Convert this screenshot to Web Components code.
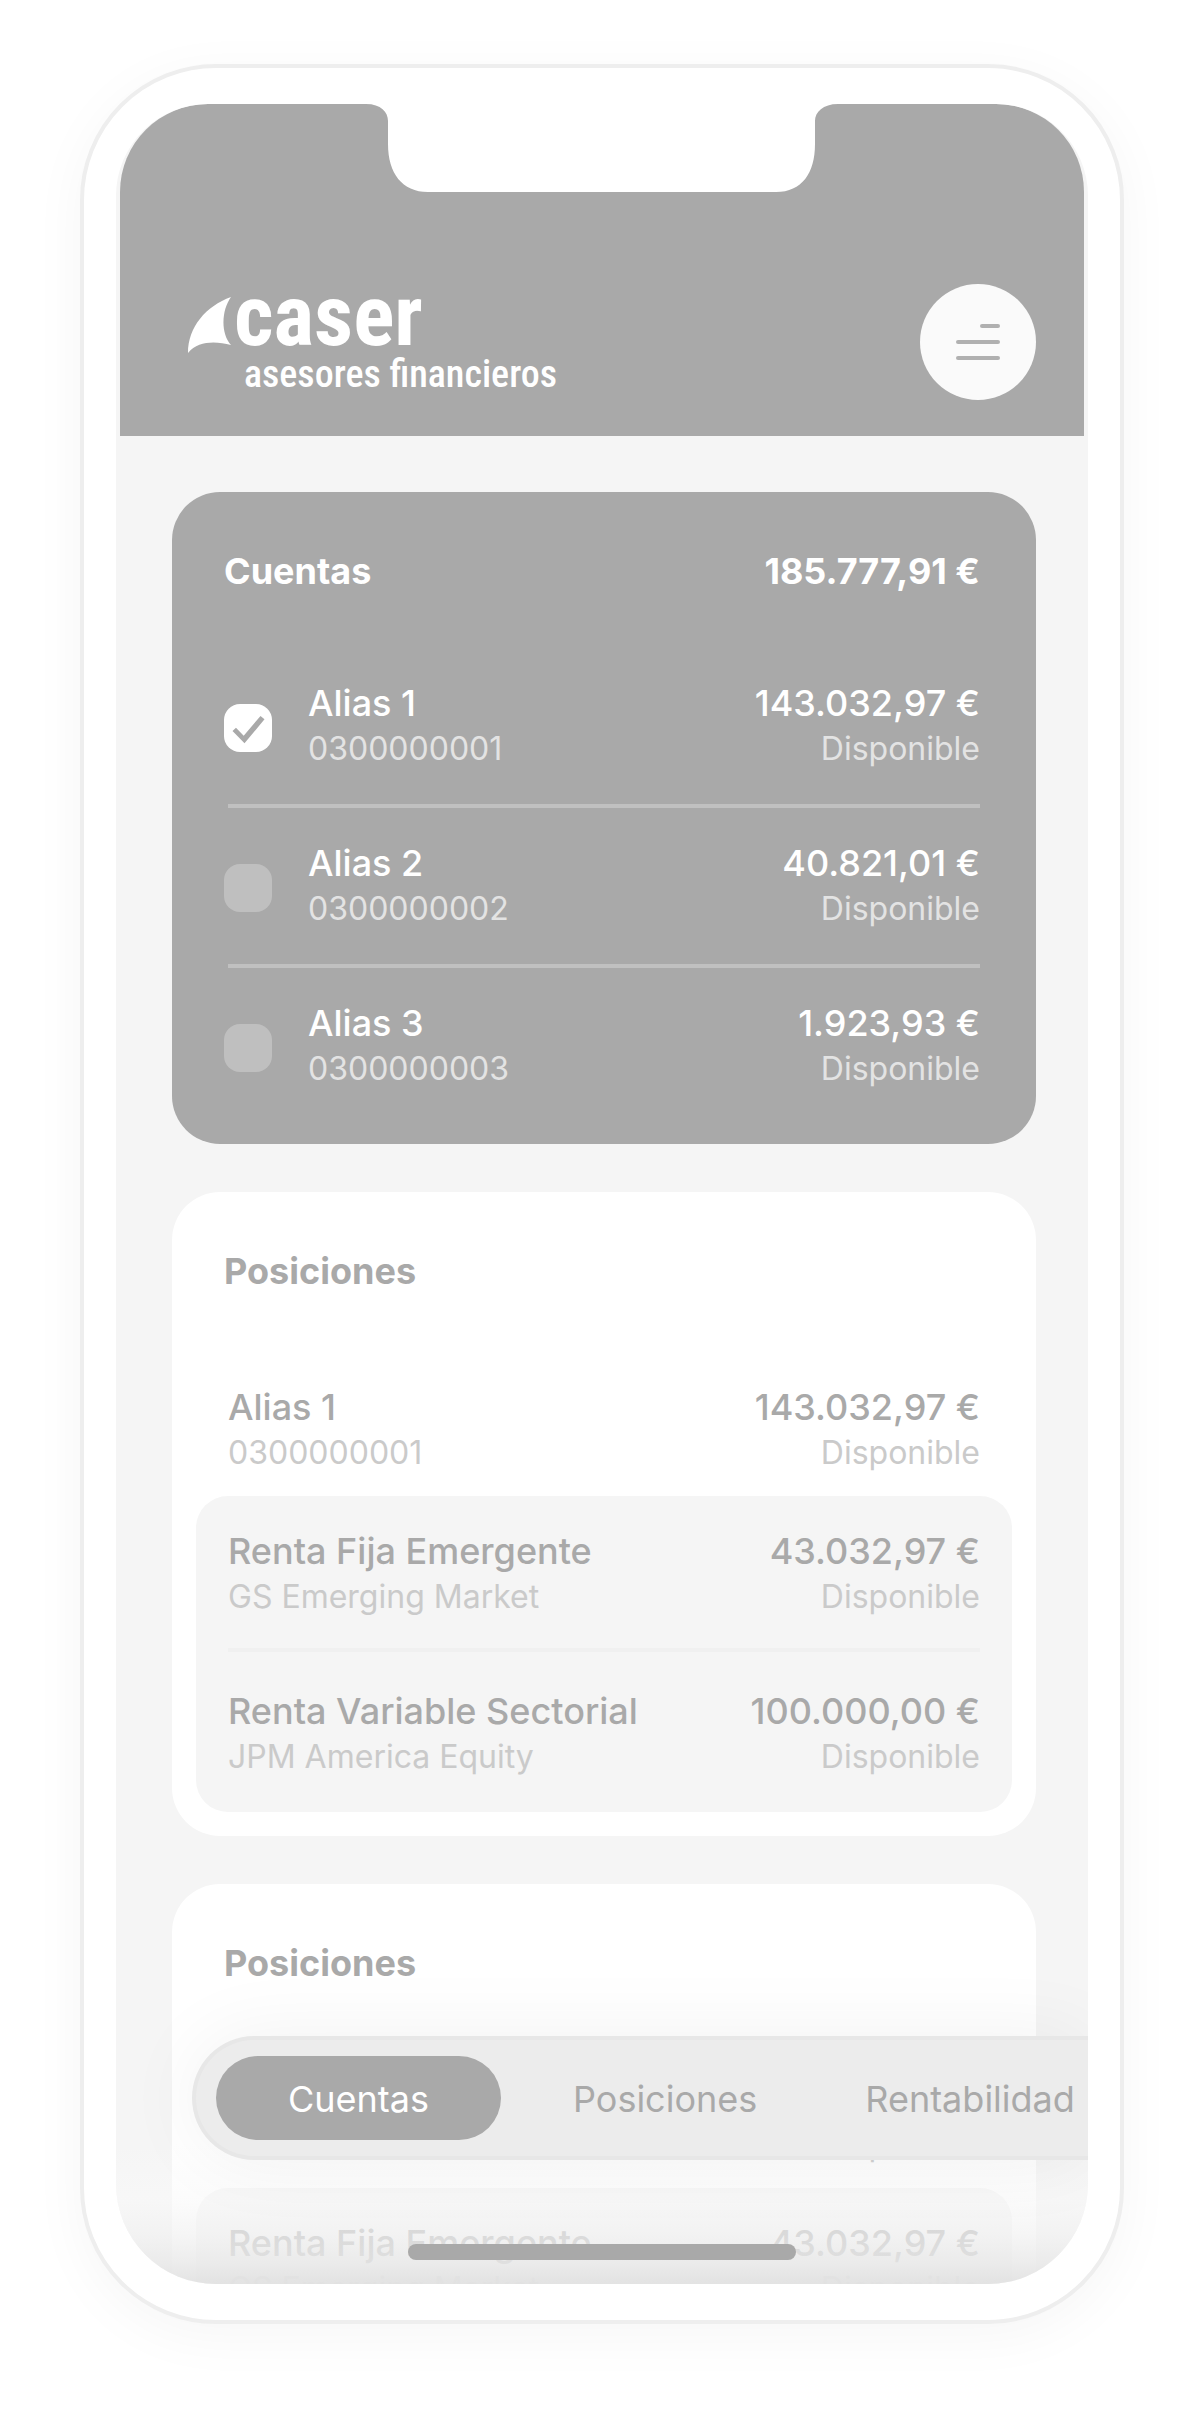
<!DOCTYPE html>
<html lang="es">
<head>
<meta charset="utf-8">
<meta name="viewport" content="width=device-width, initial-scale=1">
<title>Caser asesores financieros</title>
<style>
  * { box-sizing: border-box; }
  body {
    margin: 0;
    height: 100vh;
    padding: 64px 80px 96px;
    background: #fff;
    font-family: Inter, "Liberation Sans", sans-serif;
    color: #a9a9a9;
    --grey: #a9a9a9;
    --soft: #cacaca;
    --surface: #f5f5f5;
  }
</style>
</head>
<body>
<phone-frame>
  <app-header slot="header"></app-header>

  <account-card heading="Cuentas" total="185.777,91 €" tone="dark">
    <account-row selectable checked name="Alias 1" detail="0300000001" amount="143.032,97 €" note="Disponible"></account-row>
    <account-row selectable name="Alias 2" detail="0300000002" amount="40.821,01 €" note="Disponible"></account-row>
    <account-row selectable name="Alias 3" detail="0300000003" amount="1.923,93 €" note="Disponible"></account-row>
  </account-card>

  <account-card heading="Posiciones">
    <account-row lead name="Alias 1" detail="0300000001" amount="143.032,97 €" note="Disponible"></account-row>
    <holding-group>
      <account-row name="Renta Fija Emergente" detail="GS Emerging Market" amount="43.032,97 €" note="Disponible"></account-row>
      <account-row name="Renta Variable Sectorial" detail="JPM America Equity" amount="100.000,00 €" note="Disponible"></account-row>
    </holding-group>
  </account-card>

  <account-card heading="Posiciones">
    <account-row lead name="Alias 1" detail="0300000001" amount="143.032,97 €" note="Disponible"></account-row>
    <holding-group>
      <account-row name="Renta Fija Emergente" detail="GS Emerging Market" amount="43.032,97 €" note="Disponible"></account-row>
    </holding-group>
  </account-card>

  <tab-bar slot="tabs"></tab-bar>
</phone-frame>

<script>
const define = (name, markup, setup) => {
  const template = document.createElement("template");
  template.innerHTML = "<style>*{box-sizing:border-box}</style>" + markup;
  customElements.define(name, class extends HTMLElement {
    constructor() {
      super();
      this.attachShadow({ mode: "open" }).append(template.content.cloneNode(true));
    }
    connectedCallback() {
      if (setup) setup(this, this.shadowRoot);
    }
  });
};

define("phone-frame", `
  <style>
    :host {
      display: block; height: 100%; padding: 36px 32px;
      border: 4px solid #eee; border-radius: 136px; background: #fff;
      box-shadow: 0 12px 56px rgba(0,0,0,.04);
    }
    .screen {
      position: relative; height: 100%; overflow: hidden;
      border-radius: 92px 92px 100px 100px; background: var(--surface);
    }
    main { display: flex; flex-direction: column; gap: 48px; padding: 56px 52px 0 56px; }
    .fade {
      position: absolute; left: 0; right: 0; bottom: 0; height: 140px;
      background: linear-gradient(rgba(252,252,252,0), rgba(249,249,249,.55) 40%,
        rgba(241,241,241,.68) 65%, rgba(233,233,233,.85) 85%, rgba(226,226,226,.97));
    }
    .tabs { position: absolute; left: 76px; right: 0; bottom: 124px; }
    .home {
      position: absolute; left: 0; right: 0; bottom: 24px; margin: auto;
      width: 40%; height: 16px; border-radius: 8px; background: var(--grey);
    }
  </style>
  <div class="screen">
    <slot name="header"></slot>
    <main><slot></slot></main>
    <div class="fade"></div>
    <div class="tabs"><slot name="tabs"></slot></div>
    <div class="home"></div>
  </div>`);

define("app-header", `
  <style>
    :host { display: block; margin: 0 4px; border-radius: 88px 88px 0 0; background: var(--grey); }
    .notch { display: block; width: 472px; height: 88px; margin: 0 auto; fill: #fff; }
    .bar { display: flex; justify-content: space-between; padding: 92px 48px 36px 68px; }
    .logo { width: 372px; height: 116px; fill: #fff; font-family: "Roboto Condensed", "Noto Sans", sans-serif; overflow: visible; }
    .brand { font-size: 86px; font-weight: 700; }
    .tagline { font-size: 38px; font-weight: 500; }
    button {
      width: 116px; height: 116px; padding: 0; border: 0; border-radius: 50%; background: #fafafa;
    }
    button svg { display: block; fill: #b0b0b0; }
  </style>
  <svg class="notch" viewBox="0 0 472 88" aria-hidden="true">
    <path d="M0 0C15 0 22 8 22 17V40C22 69 36 88 62 88H410C436 88 449 69 449 40V17C449 8 457 0 472 0Z"/>
  </svg>
  <div class="bar">
    <svg class="logo" viewBox="0 0 372 116">
      <path d="M43 13C18 22 0 43 0 69C10 57 27 57 43 61C33 50 33 27 43 13Z"/>
      <text class="brand" x="46" y="61">caser</text>
      <text class="tagline" x="56" y="103">asesores financieros</text>
    </svg>
    <button type="button" aria-label="Menú">
      <svg width="116" height="116" viewBox="0 0 116 116">
        <rect x="60" y="40" width="20" height="4" rx="2"/>
        <rect x="36" y="56" width="44" height="4" rx="2"/>
        <rect x="36" y="72" width="44" height="4" rx="2"/>
      </svg>
    </button>
  </div>`);

define("account-card", `
  <style>
    :host { display: block; flex: none; padding: 56px 0 24px; border-radius: 48px; background: #fff; }
    :host([tone="dark"]) {
      padding-bottom: 20px; background: var(--grey); color: #fff;
      --soft: #e3e3e3; --line: #c0c0c0;
    }
    header { display: flex; justify-content: space-between; margin-bottom: 54px; padding: 0 56px 0 52px; }
    h2, strong { margin: 0; font-size: 36px; line-height: 46px; font-weight: 700; }
  </style>
  <header><h2></h2><strong></strong></header>
  <slot></slot>`, (host, root) => {
    root.querySelector("h2").textContent = host.getAttribute("heading");
    const total = host.getAttribute("total");
    if (total) root.querySelector("strong").textContent = total;
    else root.querySelector("strong")?.remove();
  });

define("holding-group", `
  <style>
    :host { display: block; margin: 0 24px; padding: 33px 0 31px; border-radius: 32px; background: var(--surface); }
    ::slotted(account-row) { --pad: 0 32px; }
    ::slotted(account-row:not(:first-child)) {
      margin: 27px 32px 0; padding-top: 37px; border-top: 4px solid #f0f0f0; --pad: 0;
    }
  </style>
  <slot></slot>`);

define("account-row", `
  <style>
    :host { display: block; }
    :host([lead]) { --pad: 37px 56px 19px; }
    :host([selectable]) { --pad: 33px 56px 31px 52px; }
    :host([selectable]:not(:first-child))::before {
      content: ""; display: block; height: 4px; margin: 0 56px; background: var(--line);
    }
    .row { display: flex; align-items: center; padding: var(--pad); }
    .box { display: grid; margin: 2px 36px 0 0; }
    .box > * { grid-area: 1 / 1; }
    input { appearance: none; width: 48px; height: 48px; margin: 0; border-radius: 16px; background: #bfbfbf; }
    input:checked { background: #fff; }
    .box svg { display: none; width: 48px; height: 48px; fill: var(--grey); pointer-events: none; }
    input:checked + svg { display: block; }
    .text { display: grid; flex: 1; grid-template-columns: 1fr auto; }
    .end { text-align: right; }
    b { font-size: 36px; line-height: 44px; font-weight: 500; }
    small { font-size: 32px; line-height: 48px; font-weight: 400; color: var(--soft); }
  </style>
  <label class="row">
    <span class="box">
      <input type="checkbox">
      <svg viewBox="0 0 48 48"><path d="M8.500 27L12 23.700L19.700 31.700L36.500 12L40.500 15.300L20.500 39.300Z"/></svg>
    </span>
    <span class="text">
      <b data-key="name"></b><b class="end" data-key="amount"></b>
      <small data-key="detail"></small><small class="end" data-key="note"></small>
    </span>
  </label>`, (host, root) => {
    root.querySelectorAll("[data-key]").forEach(el => { el.textContent = host.getAttribute(el.dataset.key); });
    if (host.hasAttribute("selectable")) root.querySelector("input").checked = host.hasAttribute("checked");
    else {
      root.querySelector(".box")?.remove();
      const label = root.querySelector("label");
      if (label) {
        const row = document.createElement("div");
        row.className = "row";
        row.append(...label.childNodes);
        label.replaceWith(row);
      }
    }
  });

define("tab-bar", `
  <style>
    :host { display: block; }
    nav {
      display: flex; gap: 36px; padding: 16px 0 16px 20px; overflow: hidden;
      border: 4px solid #e7e7e7; border-right: 0; border-radius: 62px 0 0 62px;
      background: #ececec; box-shadow: 0 0 80px rgba(0,0,0,.06);
    }
    button {
      flex: none; padding: 20px 36px 18px; border: 0; border-radius: 42px; background: none;
      font: 400 36px/46px Inter, "Liberation Sans", sans-serif; color: var(--grey);
    }
    button[aria-current] { padding-inline: 72px; background: var(--grey); color: #fff; }
  </style>
  <nav>
    <button type="button" aria-current="page">Cuentas</button>
    <button type="button">Posiciones</button>
    <button type="button">Rentabilidad</button>
  </nav>`);
</script>
</body>
</html>
